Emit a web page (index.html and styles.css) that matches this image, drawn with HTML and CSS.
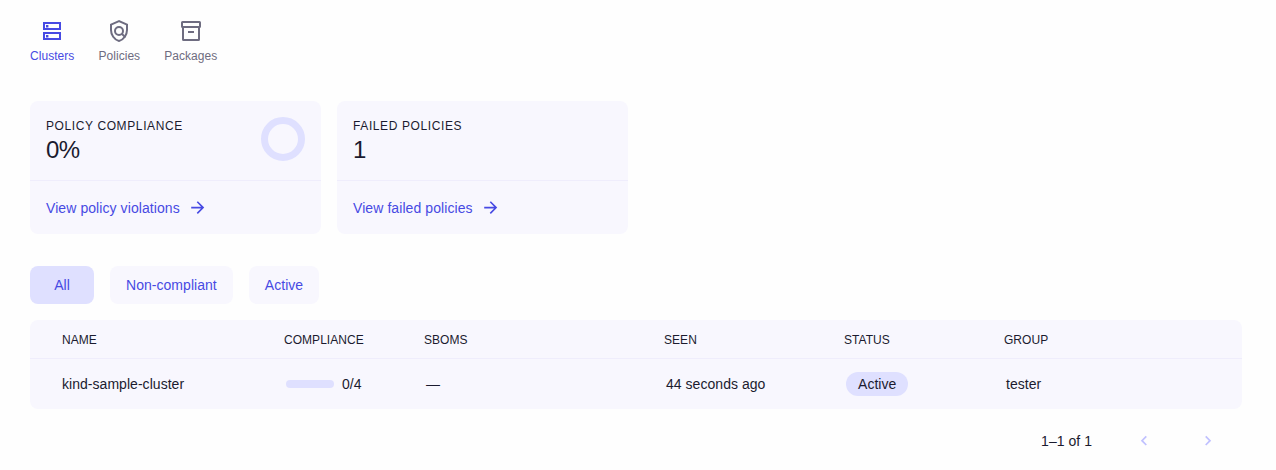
FILE: index.html
```html
<!DOCTYPE html>
<html lang="en">
<head>
<meta charset="utf-8">
<title>Clusters</title>
<link rel="stylesheet" href="styles.css">
</head>
<body>
<nav class="tabs">
  <a class="tab tab-active">
    <svg class="tab-icon" viewBox="0 0 24 24" fill="none" stroke="currentColor" stroke-width="2"><path d="M4 4h16v6H4zM4 14h16v6H4z"/><path d="M6 6h2.400v2.400H6zM6 16h2.400v2.400H6z" fill="currentColor" stroke="none"/></svg>
    <span>Clusters</span>
  </a>
  <a class="tab">
    <svg class="tab-icon" viewBox="0 0 24 24" fill="none" stroke="currentColor" stroke-width="2"><path d="M12 2.100 4 5.650V11c0 4.520 3.130 9.690 8 10.930 4.870-1.240 8-6.410 8-10.930V5.650z"/><circle cx="12" cy="12" r="4"/><path d="m14.800 14.800 3.600 3.600"/></svg>
    <span>Policies</span>
  </a>
  <a class="tab">
    <svg class="tab-icon" viewBox="0 0 24 24" fill="none" stroke="currentColor" stroke-width="2"><rect x="3" y="3" width="18" height="5" rx=".5"/><path d="M4 8v12.500a.5.5 0 0 0 .5.500h15a.5.5 0 0 0 .5-.500V8M9 13h6"/></svg>
    <span>Packages</span>
  </a>
</nav>

<section class="cards">
  <article class="card">
    <div class="card-top">
      <div>
        <div class="card-label">POLICY COMPLIANCE</div>
        <div class="card-value">0%</div>
      </div>
      <div class="ring"></div>
    </div>
    <a class="card-link">View policy violations
      <svg class="arrow" viewBox="0 0 18 18" fill="none" stroke="currentColor" stroke-width="1.600"><path d="M3.200 8.600h11.800M9.300 2.800l5.800 5.800-5.800 5.800"/></svg>
    </a>
  </article>
  <article class="card">
    <div class="card-top">
      <div>
        <div class="card-label">FAILED POLICIES</div>
        <div class="card-value">1</div>
      </div>
    </div>
    <a class="card-link">View failed policies
      <svg class="arrow" viewBox="0 0 18 18" fill="none" stroke="currentColor" stroke-width="1.600"><path d="M3.200 8.600h11.800M9.300 2.800l5.800 5.800-5.800 5.800"/></svg>
    </a>
  </article>
</section>

<div class="filters">
  <button class="filter filter-selected">All</button>
  <button class="filter">Non-compliant</button>
  <button class="filter">Active</button>
</div>

<div class="table">
  <div class="row head">
    <span>NAME</span><span>COMPLIANCE</span><span>SBOMS</span><span>SEEN</span><span>STATUS</span><span>GROUP</span>
  </div>
  <div class="row body-row">
    <span>kind-sample-cluster</span>
    <span class="cell compliance"><i class="bar"></i>0/4</span>
    <span class="cell">—</span>
    <span class="cell">44 seconds ago</span>
    <span class="cell"><b class="chip">Active</b></span>
    <span class="cell">tester</span>
  </div>
</div>

<div class="pager">
  <span class="range">1–1 of 1</span>
  <svg class="chevron" viewBox="0 0 18 18" fill="none" stroke="currentColor" stroke-width="1.700"><path d="M11.300 4.400 7 8.700l4.300 4.300"/></svg>
  <svg class="chevron" viewBox="0 0 18 18" fill="none" stroke="currentColor" stroke-width="1.700"><path d="M6.700 4.400 11 8.700 6.700 13"/></svg>
</div>
</body>
</html>
```

FILE: styles.css
```css
* { box-sizing: border-box; }

body {
  margin: 0;
  padding: 19px 34px 0 30px;
  background: #fefefe;
  color: #1b1b2f;
  font: 14px/20px "Liberation Sans", Arial, sans-serif;
  letter-spacing: .04px;
  overflow: hidden;
}

.tabs { display: flex; gap: 24px; height: 82px; }
.tab {
  display: flex;
  flex-direction: column;
  align-items: center;
  gap: 5px;
  color: #6e6c80;
  font-size: 12px;
  line-height: 16px;
  letter-spacing: .05px;
}
.tab-active { color: #474ae3; }
.tab-icon { width: 24px; height: 24px; }

.cards { display: flex; gap: 16px; }
.card {
  width: 291px;
  height: 133px;
  border-radius: 8px;
  background: #f8f7fe;
}
.card-top {
  display: flex;
  justify-content: space-between;
  height: 80px;
  padding: 16px;
  border-bottom: 1px solid #efedfc;
}
.card-label { line-height: 18px; font-size: 12px; letter-spacing: .61px; }
.card-value { font-size: 24px; line-height: 30px; letter-spacing: -.5px; }
.ring {
  width: 44px;
  height: 44px;
  border: 7px solid #dfe0ff;
  border-radius: 50%;
}
.card-link {
  display: flex;
  align-items: center;
  gap: 8px;
  height: 53px;
  padding: 0 16px;
  color: #474ae3;
  letter-spacing: .08px;
}
.arrow { width: 18px; height: 18px; }

.filters { display: flex; gap: 16px; margin: 32px 0 16px; }
.filter {
  min-width: 64px;
  height: 38px;
  padding: 0 16px;
  border: 0;
  border-radius: 8px;
  background: #f8f7fe;
  color: #474ae3;
  font: inherit;
  letter-spacing: .04px;
}
.filter-selected { background: #dfe0ff; }

.table { border-radius: 8px; background: #f8f7fe; }
.row {
  display: grid;
  grid-template-columns: 222px 140px 240px 180px 160px 1fr;
  align-items: center;
  padding-left: 32px;
}
.head { height: 39px; padding-top: 2px; border-bottom: 1px solid #efedfc; font-size: 12px; }
.body-row { height: 50px; }
.cell { padding-left: 2px; }
.compliance { display: flex; align-items: center; gap: 8px; }
.bar { width: 48px; height: 8px; border-radius: 4px; background: #dfe0ff; }
.chip {
  display: inline-block;
  height: 24px;
  padding: 0 12px;
  border-radius: 12px;
  background: #dfe0ff;
  font-weight: 400;
  line-height: 24px;
}

.pager {
  display: flex;
  align-items: center;
  justify-content: flex-end;
  height: 64px;
  padding-right: 25px;
}
.range { margin-right: 43px; }
.chevron { width: 18px; height: 18px; color: #c0c1ff; }
.chevron + .chevron { margin-left: 46px; }
```
